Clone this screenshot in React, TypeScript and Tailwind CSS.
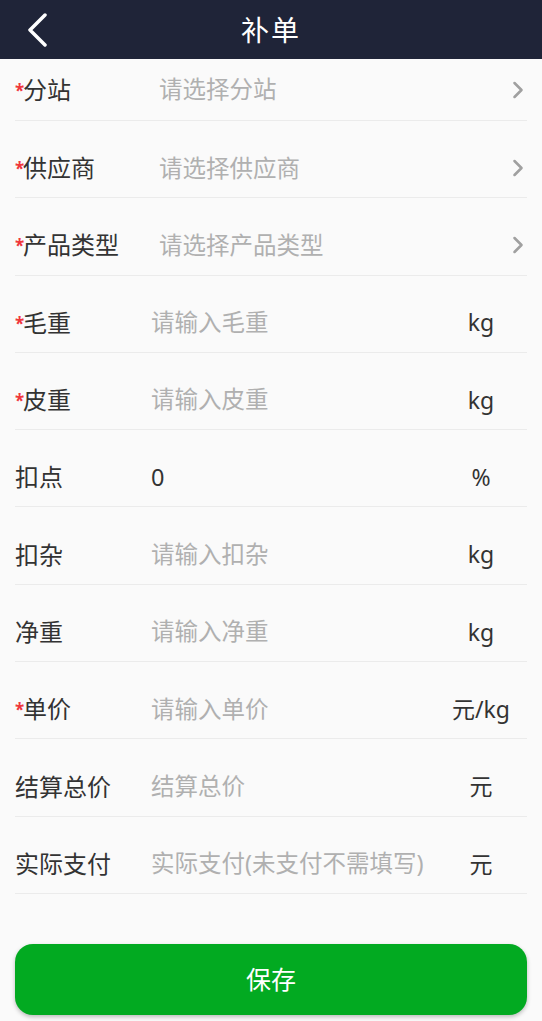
import { ChevronRight } from "lucide-react";

type Field = {
    label: string;
    required?: boolean;
    placeholder?: string;
    value?: string;
    unit?: string;
    select?: boolean;
};

const fields: Field[] = [
    { label: "分站", required: true, placeholder: "请选择分站", select: true },
    { label: "供应商", required: true, placeholder: "请选择供应商", select: true },
    { label: "产品类型", required: true, placeholder: "请选择产品类型", select: true },
    { label: "毛重", required: true, placeholder: "请输入毛重", unit: "kg" },
    { label: "皮重", required: true, placeholder: "请输入皮重", unit: "kg" },
    { label: "扣点", value: "0", unit: "%" },
    { label: "扣杂", placeholder: "请输入扣杂", unit: "kg" },
    { label: "净重", placeholder: "请输入净重", unit: "kg" },
    { label: "单价", required: true, placeholder: "请输入单价", unit: "元/kg" },
    { label: "结算总价", placeholder: "结算总价", unit: "元" },
    { label: "实际支付", placeholder: "实际支付(未支付不需填写)", unit: "元" },
];

const FormRow = ({ field, first }: { field: Field; first: boolean }) => {
    return (
        <div
            className={`flex items-center border-b border-[#ebebeb] ${first ? "h-[62px]" : "h-[77.3px] pt-[18px]"}`}
        >
            <div className={`flex items-center shrink-0 ${field.select ? "w-[144px]" : "w-[136px]"}`}>
                {field.required && (
                    <span className="text-[#f0373c] text-[17px] font-bold leading-none w-[8px] mt-[1px]">*</span>
                )}
                <span className="text-[24px] text-[#333333]">{field.label}</span>
            </div>
            <div className={`flex-1 text-[23.5px] ${field.value ? "text-[#333333]" : "text-[#b0b0b0]"}`}>
                {field.value ?? field.placeholder}
            </div>
            {field.select ? (
                <ChevronRight className="w-[28px] h-[28px] text-[#a0a0a0] -mr-[5px]" strokeWidth={2.2} />
            ) : (
                <div className="w-[80px] mr-[6px] text-center text-[23px] text-[#333333]">{field.unit}</div>
            )}
        </div>
    );
};

const App = () => {
    return (
        <div
            className="min-h-[1021px] bg-[#fafafa] flex flex-col"
            style={{ fontFamily: '"Noto Sans", "Noto Sans CJK SC", sans-serif' }}
        >
            <header className="h-[59px] bg-[#1f2438] relative flex items-center justify-center">
                <svg
                    className="absolute left-[27px] top-[13px]"
                    width="22"
                    height="34"
                    viewBox="0 0 22 34"
                    fill="none"
                    stroke="white"
                    strokeWidth="3.5"
                    strokeLinecap="round"
                    strokeLinejoin="round"
                >
                    <path d="M18 2 L3 17 L18 32" />
                </svg>
                <h1 className="text-white text-[28px] tracking-[2px]">补单</h1>
            </header>

            <section className="px-[15px]">
                {fields.map((field, i) => (
                    <FormRow key={field.label} field={field} first={i === 0} />
                ))}
            </section>

            <div className="px-[15px] pt-[50px]">
                <button className="w-full h-[71px] rounded-[18px] bg-[#02aa21] text-white text-[25px] shadow-[0_2px_4px_rgba(0,0,0,0.25)]">
                    保存
                </button>
            </div>
        </div>
    );
};

export default App;
